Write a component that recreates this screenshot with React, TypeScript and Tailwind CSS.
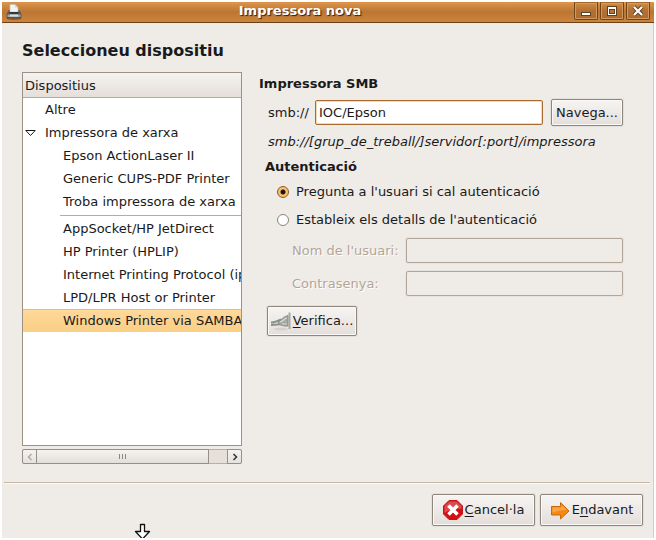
import { useState } from "react";
import type { ReactNode } from "react";

const buttonClass =
  "flex shrink-0 items-center justify-center rounded-xs border border-[#8f877e] bg-linear-to-b from-[#f6f4f2] to-[#e4deda] shadow-[0_0_0_1px_#e3dfda,inset_0_0_0_1px_#faf9f8]";

const networkPrinters = ["Epson ActionLaser II", "Generic CUPS-PDF Printer", "Troba impressora de xarxa"];
const connectionTypes = [
  "AppSocket/HP JetDirect",
  "HP Printer (HPLIP)",
  "Internet Printing Protocol (ipp)",
  "LPD/LPR Host or Printer",
  "Windows Printer via SAMBA",
];

function PrinterIcon() {
  return (
    <svg className="mt-0.5 size-4 shrink-0" viewBox="0 0 16 16" aria-hidden="true">
      <ellipse cx="8" cy="14.5" rx="7.5" ry="1.5" fill="#5b3a18" opacity=".5" />
      <path d="M3 6.500h10l2 4v3.500H1v-3.500z" fill="#5c5e62" stroke="#4b4d50" strokeWidth=".8" />
      <path d="M4 8V.5h5l3 3V8z" fill="#f4f4f3" stroke="#c5c2bd" strokeWidth=".7" />
      <path d="M9 .5v3h3" fill="#d5d3d0" />
      <path d="M3.500 8h9v2h-9z" fill="#35373a" />
      <path d="M1.500 10.500h13V13h-13z" fill="#a4a7aa" />
      <path d="M4 10.500h8v2H4z" fill="#dcdddd" />
    </svg>
  );
}

function WindowButton({ label, children }: { label: string; children: ReactNode }) {
  return (
    <button
      type="button"
      aria-label={label}
      className="flex h-[18px] w-6 items-center justify-center rounded-b-xs border border-[#6f451a] border-t-[#a66a2c] bg-linear-to-b from-[#cf8a45] via-[#b07033] to-[#aa6d31] shadow-[inset_0_0_0_1px_#d29a62]"
    >
      <svg className="h-3 w-3" viewBox="0 0 12 12" aria-hidden="true" shapeRendering="crispEdges">
        {children}
      </svg>
    </button>
  );
}

function TitleBar() {
  return (
    <header className="flex h-[21px] items-start border-b border-[#6d4116] bg-linear-to-b from-[#df954c] from-0% via-[#bb7633] via-50% to-[#cd853c] pr-1 pl-1">
      <PrinterIcon />
      <h1 className="flex-1 pl-1 text-center text-[13px] leading-[18px] font-bold text-white [text-shadow:1px_1px_1px_#2c2012]">
        Impressora nova
      </h1>
      <div className="flex gap-0.5">
        <WindowButton label="Minimitza">
          <path d="M1 7h10v4H1z" fill="#63401b" />
          <path d="M2 8h8v2H2z" fill="#fff" />
        </WindowButton>
        <WindowButton label="Maximitza">
          <path d="M1 1h10v10H1z" fill="#63401b" />
          <path d="M2 2h8v8H2z" fill="#fff" />
          <path d="M3 4h6v5H3z" fill="#63401b" />
          <path d="M4 5h4v3H4z" fill="#b57636" />
        </WindowButton>
        <WindowButton label="Tanca">
          <g shapeRendering="auto">
            <path d="m2 2 8 8m0-8-8 8" stroke="#63401b" strokeWidth="4" />
            <path d="m2 2 8 8m0-8-8 8" stroke="#fff" strokeWidth="2.2" />
          </g>
        </WindowButton>
      </div>
    </header>
  );
}

function DeviceRow({ name, selected, onSelect }: { name: string; selected: boolean; onSelect: () => void }) {
  return (
    <li
      role="treeitem"
      aria-selected={selected}
      onClick={onSelect}
      className={
        selected
          ? "h-[23px] border-t border-[#e9bd74] bg-linear-to-b from-[#ffd89a] to-[#f9cf85] pl-10 leading-[22px]"
          : "h-[23px] pl-10 leading-[23px]"
      }
    >
      {name}
    </li>
  );
}

function DeviceList() {
  const [selected, setSelected] = useState("Windows Printer via SAMBA");
  const row = (name: string) => (
    <DeviceRow key={name} name={name} selected={selected === name} onSelect={() => setSelected(name)} />
  );
  return (
    <section className="flex w-[220px] shrink-0 flex-col gap-[3px]">
      <div className="flex-1 overflow-hidden border border-[#9c9284] bg-white whitespace-nowrap">
        <h3 className="h-[25px] border-b border-[#b5aca0] bg-linear-to-b from-[#f4f2f0] to-[#e5dfda] pl-0.5 leading-[26px]">
          Dispositius
        </h3>
        <ul role="tree" aria-label="Dispositius">
          <li role="treeitem" aria-selected={false} className="h-[23px] pl-[22px] leading-[23px]">
            Altre
          </li>
          <li role="treeitem" aria-expanded="true" aria-selected={false}>
            <div className="flex h-[23px] items-center gap-[9px] pl-0.5 leading-[23px]">
              <svg className="h-2 w-[11px]" viewBox="0 0 11 8" aria-hidden="true">
                <path d="M.8 1.5h9.4L5.5 6.5z" fill="#fff" stroke="#1a1a1a" />
              </svg>
              Impressora de xarxa
            </div>
            <ul role="group">
              {networkPrinters.map(row)}
              <li role="separator" className="mt-0.5 mb-px ml-[37px] h-px bg-[#b5aca0]" />
              {connectionTypes.map(row)}
            </ul>
          </li>
        </ul>
      </div>
      <div className="flex h-[15px] rounded-xs border border-[#b9aea2] bg-[#e6dfda]">
        <button
          type="button"
          aria-label="Desplaça a l'esquerra"
          className="-my-px -ml-px flex w-[15px] items-center justify-center rounded-l-xs border border-[#978f85] bg-linear-to-b from-[#f4f3f1] to-[#e6e2de]"
        >
          <svg className="h-2 w-2" viewBox="0 0 8 8" aria-hidden="true">
            <path d="M5.5 1 2.5 4l3 3" fill="none" stroke="#b5aca3" strokeWidth="1.6" />
          </svg>
        </button>
        <div className="-my-px -ml-px flex flex-1 items-center justify-center gap-0.5 border border-[#978f85] bg-linear-to-b from-[#f4f3f1] to-[#e3deda]">
          <span className="h-[5px] w-px bg-[#8e867d]" />
          <span className="h-[5px] w-px bg-[#8e867d]" />
          <span className="h-[5px] w-px bg-[#8e867d]" />
        </div>
        <button
          type="button"
          aria-label="Desplaça a la dreta"
          className="-my-px -mr-px ml-[18px] flex w-[15px] items-center justify-center rounded-r-xs border border-[#978f85] bg-linear-to-b from-[#f4f3f1] to-[#e6e2de]"
        >
          <svg className="h-2 w-2" viewBox="0 0 8 8" aria-hidden="true">
            <path d="m2.5 1 3 3-3 3" fill="none" stroke="#3b3835" strokeWidth="1.6" />
          </svg>
        </button>
      </div>
    </section>
  );
}

function AuthOption({ label, checked, onChange }: { label: string; checked: boolean; onChange: () => void }) {
  return (
    <label className="flex h-7 items-center gap-[7px]">
      <input
        type="radio"
        name="auth"
        checked={checked}
        onChange={onChange}
        className="size-3 appearance-none rounded-full border border-[#8d8378] bg-white checked:border-[#8a5a23] checked:bg-[radial-gradient(circle,#1c1712_0_2px,#f9bf6d_3px)]"
      />
      {label}
    </label>
  );
}

function CredentialField({ id, label, type }: { id: string; label: string; type: string }) {
  return (
    <div className="flex items-center">
      <label htmlFor={id} className="w-[114px] text-[#b3a699] [text-shadow:1px_1px_0_#fff]">
        {label}
      </label>
      <input
        id={id}
        type={type}
        disabled
        className="h-[25px] min-w-0 flex-1 rounded-xs border border-[#b3a597] bg-[#efebe7] shadow-[0_0_0_1px_#e9e3df]"
      />
    </div>
  );
}

function SmbSettings() {
  const [uri, setUri] = useState("IOC/Epson");
  const [prompt, setPrompt] = useState(true);
  return (
    <section className="min-w-0 flex-1 pr-[10px]">
      <h3 className="h-[22px] leading-6 font-bold">Impressora SMB</h3>
      <div className="mt-[5px] flex h-[27px] items-center pl-[9px]">
        <label htmlFor="uri" className="w-[47px]">
          smb://
        </label>
        <input
          id="uri"
          value={uri}
          onChange={(event) => setUri(event.target.value)}
          className="mr-2 h-[25px] min-w-0 flex-1 rounded-xs border border-[#a96a30] bg-white px-[3px] shadow-[inset_0_0_0_1px_#f8d9ae] outline-none"
        />
        <button type="button" className={`${buttonClass} h-[27px] w-[72px]`}>
          Navega...
        </button>
      </div>
      <p className="mt-1 h-[22px] pl-[9px] leading-6 italic">smb://[grup_de_treball/]servidor[:port]/impressora</p>
      <fieldset className="pl-[6px]">
        <legend className="h-[26px] leading-[30px] font-bold">Autenticació</legend>
        <div className="pl-3">
          <AuthOption label="Pregunta a l'usuari si cal autenticació" checked={prompt} onChange={() => setPrompt(true)} />
          <AuthOption
            label="Estableix els detalls de l'autenticació"
            checked={!prompt}
            onChange={() => setPrompt(false)}
          />
        </div>
        <div className="mt-1 flex flex-col gap-2 pl-[27px]">
          <CredentialField id="user" label="Nom de l'usuari:" type="text" />
          <CredentialField id="password" label="Contrasenya:" type="password" />
        </div>
      </fieldset>
      <button type="button" className={`${buttonClass} mt-[10px] ml-2 h-[30px] w-[90px] gap-0.5`}>
        <svg className="size-5" viewBox="0 0 20 20" aria-hidden="true">
          <ellipse cx="10" cy="18" rx="7" ry="1.500" fill="#c9c5c0" opacity=".6" />
          <path d="M0 11.500c4 0 6-1 10-3M0 14c5 0 8-.8 12-1.500" stroke="#8d918d" strokeWidth="2" fill="none" />
          <path d="M7 10.500c4-1.500 5-5 10-6V15c-3 .5-6-.5-9-1.500z" fill="#a5aaa6" stroke="#7f837f" strokeWidth=".8" />
          <path d="M9 11c4-1 4-3.500 7-4M11 13h5" stroke="#d5d8d4" strokeWidth="1.200" fill="none" />
          <path d="M18.500 1.500V18" stroke="#a4a8a4" strokeWidth="2" />
        </svg>
        <span>
          <u className="underline-offset-2">V</u>erifica...
        </span>
      </button>
    </section>
  );
}

export default function App() {
  return (
    <div className="flex min-h-screen flex-col bg-white p-0.5 font-['DejaVu_Sans',sans-serif] text-[13px] leading-5 text-[#1a1a1a]">
      <div className="relative flex flex-1 flex-col bg-[#efebe7]">
        <TitleBar />
        <main className="flex flex-1 flex-col border-r border-[#d3cdc7] pt-4">
          <h2 className="h-[33px] pl-5 text-[16px] leading-6 font-bold">Seleccioneu dispositiu</h2>
          <div className="flex flex-1 gap-[17px] pr-5 pb-[18px] pl-5">
            <DeviceList />
            <SmbSettings />
          </div>
          <footer className="mr-[3px] ml-0.5 flex justify-end gap-[5px] border-t border-[#c6b8a8] pt-[11px] pr-[7px] pb-3 shadow-[inset_0_1px_0_#fbfaf8]">
            <button type="button" className={`${buttonClass} h-8 w-[103px] gap-0.5`}>
              <svg className="size-5" viewBox="0 0 20 20" aria-hidden="true">
                <path d="M6 .5h8L19.500 6v8L14 19.500H6L.5 14V6z" fill="#d40f14" stroke="#c4161a" />
                <path d="M6.300 1.500h7.400l4.800 4.800V9C12 8 6 10 1.500 13V6.300z" fill="#e04a4e" />
                <path d="m5.500 5.500 9 9m0-9-9 9" stroke="#fff" strokeWidth="3.600" />
              </svg>
              <span>
                <u className="underline-offset-2">C</u>ancel·la
              </span>
            </button>
            <button type="button" className={`${buttonClass} h-8 w-[103px] gap-0.5`}>
              <svg className="size-5" viewBox="0 0 20 20" aria-hidden="true">
                <path d="M1.500 6.500h9v-4l8.500 8.500-8.500 8v-4h-9z" fill="#f8880d" stroke="#c56a12" strokeLinejoin="round" />
                <path d="M2.500 7.500h9V5l5 5c-4 0-8 .5-14 2.500z" fill="#fca548" />
              </svg>
              <span>
                E<u className="underline-offset-2">n</u>davant
              </span>
            </button>
          </footer>
        </main>
        <svg
          className="pointer-events-none absolute bottom-0 left-[132px] h-[15px] w-[18px]"
          viewBox="0 0 18 15"
          aria-hidden="true"
        >
          <path d="M6.500 1.500h4v7H15.500L8.500 16 1.500 8.500h5z" fill="#fff" stroke="#111" strokeWidth="1.300" strokeLinejoin="round" />
        </svg>
      </div>
    </div>
  );
}
